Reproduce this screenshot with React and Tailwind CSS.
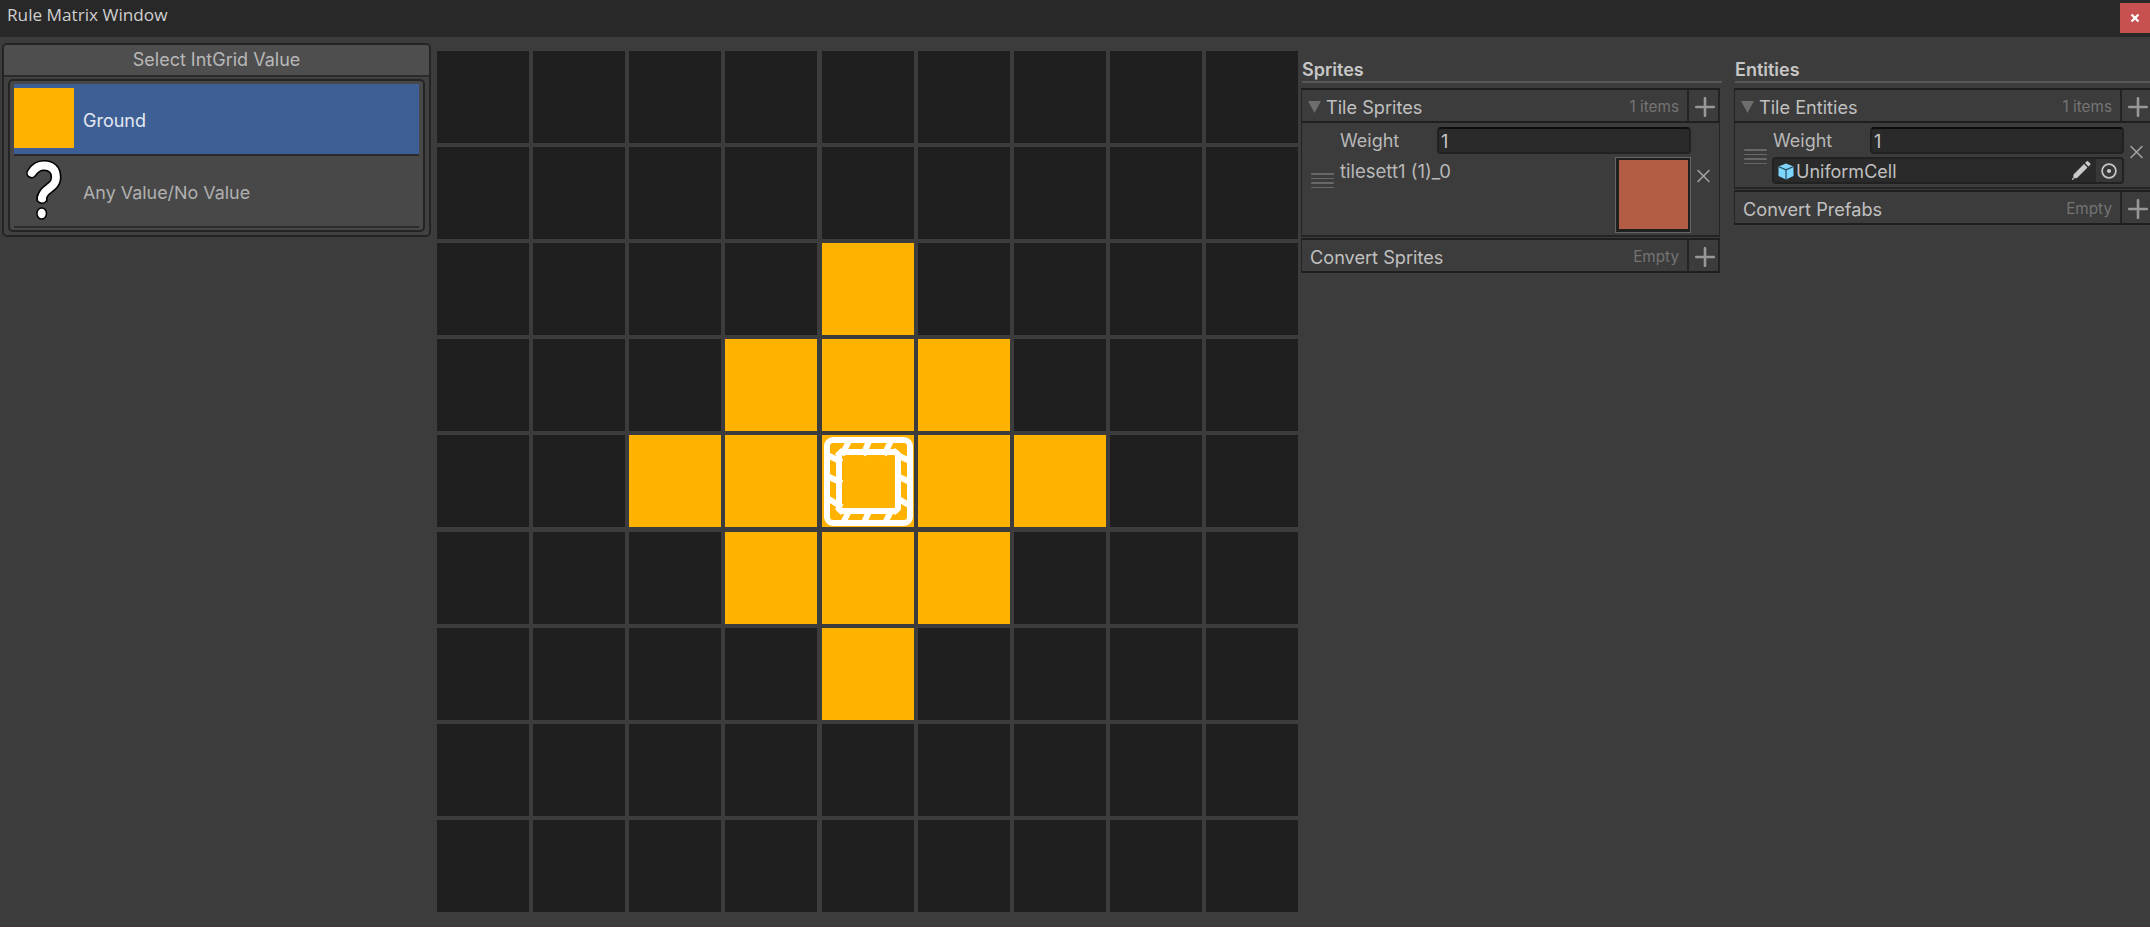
const YELLOW = new Set(['2-4','3-3','3-4','3-5','4-2','4-3','4-4','4-5','4-6','5-3','5-4','5-5','6-4']);

function CenterMark() {
  return (
    <svg width="92" height="92" viewBox="0 0 92 92" className="block">
      <g stroke="#fff" strokeWidth="6" fill="none">
        <path d="M28 4 20 20M48 4 41 20M70 4 62 20M28 74 20 90M48 74 41 90M70 74 62 90" />
        <path d="M5 20 20 27M5 41 20 48M5 63 20 72M75 20 90 27M75 41 90 48M75 63 90 72" />
        <path d="M14 20 20 14M72 14 78 20M14 73 20 79M72 79 78 73" strokeWidth="3" />
      </g>
      <rect x="5" y="5" width="83" height="83" rx="6" fill="none" stroke="#fff" strokeWidth="6" />
      <rect x="17" y="17" width="59" height="59" rx="4" fill="none" stroke="#fff" strokeWidth="6" />
    </svg>
  );
}

function Matrix() {
  return (
    <div className="mt-[14px] ml-[6px] grid h-[861px] w-[861px] shrink-0 grid-cols-[96px_96px_96px_97px_96px_96px_96px_96px_92px] grid-rows-[96px_96px_96px_96px_97px_96px_96px_96px_92px]">
      {Array.from({ length: 81 }, (_, i) => {
        const key = `${Math.floor(i / 9)}-${i % 9}`;
        return (
          <div key={key} className={`h-[92px] w-[92px] ${YELLOW.has(key) ? 'bg-[#ffb300]' : 'bg-[#1f1f1f]'}`}>
            {key === '4-4' && <CenterMark />}
          </div>
        );
      })}
    </div>
  );
}

function Plus() {
  return (
    <svg width="20" height="20" viewBox="0 0 20 20" className="block shrink-0">
      <path d="M10 1.200v17.600M1.200 10h17.600" stroke="#989898" strokeWidth="2.600" strokeLinecap="round" />
    </svg>
  );
}

function Cross() {
  return (
    <svg width="13" height="14" viewBox="0 0 13 14" className="block shrink-0">
      <path d="M1 1.500l11 11M12 1.500l-11 11" stroke="#a2a2a2" strokeWidth="1.6" strokeLinecap="round" />
    </svg>
  );
}

function Handle() {
  return (
    <div className="flex h-[15px] w-[23px] flex-col justify-between">
      {[0, 1, 2, 3].map((n) => (
        <div key={n} className="h-[1.5px] rounded-full bg-[#686868]" />
      ))}
    </div>
  );
}

function ListHeader({ title, note, open }) {
  return (
    <div className="flex h-[35px] w-[419px] border-t-2 border-b-2 border-[#1f1f1f]">
      <div className={`flex w-[386px] items-center border-l border-[#242424] pr-[8px] ${open ? 'pl-[6px]' : 'pl-[8px]'}`}>
        {open && (
          <svg width="13" height="12" viewBox="0 0 13 12" className="mt-[2px] mr-[5px] block">
            <path d="M0 0h13L6.500 12z" fill="#6e6e6e" />
          </svg>
        )}
        <span className="pt-[2px] text-[18.150px] leading-[22px] text-[#c0c0c0]">{title}</span>
        <span className="ml-auto pt-[2px] text-[15.300px] leading-[20px] text-[#747474]">{note}</span>
      </div>
      <div className="flex w-[33px] justify-center border-r-2 border-l-2 border-[#242424] pt-[7px] pl-[3px]">
        <Plus />
      </div>
    </div>
  );
}

function WeightField() {
  return (
    <div className="flex h-[27px]">
      <span className="w-[97px] pt-[3px] text-[18px] leading-[22px] text-[#b8b8b8]">Weight</span>
      <div className="h-[27px] w-[254px] rounded-[4px] border-2 border-[#212121] border-t-[#0d0d0d] bg-[#2a2a2a] pl-[2px] text-[18px] leading-[25px] text-[#c8c8c8]">1</div>
    </div>
  );
}

function Heading({ children }) {
  return (
    <div className="ml-px h-[26px] w-[420px] border-b-2 border-[#585858] text-[18px] leading-[25px] font-semibold text-[#c6c6c6]">{children}</div>
  );
}

function Sprites() {
  return (
    <div className="mt-[20px] ml-[3px] flex w-[421px] shrink-0 flex-col">
      <Heading>Sprites</Heading>
      <div className="mt-[5px]">
        <ListHeader title="Tile Sprites" note="1 items" open />
        <div className="flex h-[114px] w-[419px] border-r border-b-2 border-l border-[#242424] pt-[4px]">
          <div className="w-[38px] pt-[46px] pl-[9px]"><Handle /></div>
          <div className="w-[351px]">
            <WeightField />
            <div className="mt-[3px] flex justify-between">
              <span className="pt-[3px] text-[18.500px] leading-[22px] text-[#b8b8b8]">tilesett1 (1)_0</span>
              <div className="h-[76px] w-[76px] border border-[#666] bg-[#202020] pt-[2px] pl-[3px]">
                <div className="h-[69px] w-[69px] bg-[#b35d44]" />
              </div>
            </div>
          </div>
          <div className="pt-[42px] pl-[6px]"><Cross /></div>
        </div>
        <div className="mt-px"><ListHeader title="Convert Sprites" note="Empty" /></div>
      </div>
    </div>
  );
}

function PrefabCube() {
  return (
    <svg width="16" height="17" viewBox="0 0 16 17" className="mt-px block">
      <path d="M8 .5 15.500 3.500v9.500L8 16.500.5 13V3.500z" fill="#7fd6fd" />
      <path d="M.8 3.800 8 6.800l7.200-3M8 6.800v9.500" fill="none" stroke="#24485a" strokeWidth="1.200" />
    </svg>
  );
}

function Entities() {
  return (
    <div className="mt-[20px] flex w-[416px] shrink-0 flex-col overflow-hidden">
      <Heading>Entities</Heading>
      <div className="mt-[5px]">
        <ListHeader title="Tile Entities" note="1 items" open />
        <div className="flex h-[66px] w-[419px] border-r border-b-2 border-l border-[#242424] pt-[4px]">
          <div className="w-[38px] pt-[22px] pl-[9px]"><Handle /></div>
          <div className="w-[351px]">
            <WeightField />
            <div className="mt-[3px] -ml-px flex h-[27px] w-[352px] items-center overflow-hidden rounded-[4px] border-2 border-[#212121] bg-[#2a2a2a] pl-[4px]">
              <PrefabCube />
              <span className="ml-[2px] pt-[2px] text-[18px] leading-[22px] text-[#c0c0c0]">UniformCell</span>
              <svg width="20" height="20" viewBox="0 0 20 20" className="mr-[5px] mb-[2px] ml-auto block">
                <path d="M2.500 14.500 13 4l3.500 3.500L6 18l-3.800.4zM14 3l1.800-1.800q.6-.6 1.200 0l2.300 2.300q.6.6 0 1.200L17.500 6.500z" fill="#cacaca" />
                <path d="M1 18.300h1.500v1.500H1z" fill="#cacaca" />
              </svg>
              <div className="flex h-[23px] w-[26px] items-center justify-center bg-[#373737]">
                <svg width="16" height="16" viewBox="0 0 16 16" className="block">
                  <circle cx="8" cy="8" r="6.900" fill="none" stroke="#c8c8c8" strokeWidth="1.700" />
                  <circle cx="8" cy="8" r="2.100" fill="#c8c8c8" />
                </svg>
              </div>
            </div>
          </div>
          <div className="pt-[18px] pl-[6px]"><Cross /></div>
        </div>
        <div className="mt-px"><ListHeader title="Convert Prefabs" note="Empty" /></div>
      </div>
    </div>
  );
}

function QuestionMark() {
  const hook = 'M17.700 13C21 7.500 25 5.500 30 5.500c7.500 0 12 4 12 11.500C42 29 28.500 28 28 38.500';
  return (
    <svg width="60" height="60" viewBox="0 0 60 60" className="mb-[2px] block">
      <g fill="none" stroke="#000" strokeWidth="11" strokeLinejoin="round">
        <path d={hook} strokeLinecap="round" />
        <path d="M28 35v7" />
      </g>
      <ellipse cx="27.700" cy="53.500" rx="5.500" ry="6.300" fill="#000" />
      <g fill="none" stroke="#fff" strokeWidth="7.800">
        <path d={hook} strokeLinecap="round" />
        <path d="M28 36v4.700" />
      </g>
      <ellipse cx="27.700" cy="53.500" rx="4" ry="4.800" fill="#fff" />
    </svg>
  );
}

function ValuePicker() {
  return (
    <div className="mt-[6px] ml-[2px] h-[194px] w-[429px] shrink-0 rounded-[5px] border-2 border-[#242424] bg-[#414141]">
      <div className="h-[32px] rounded-t-[3px] border-b-2 border-[#2a2a2a] bg-[#4e4e4e] text-center text-[18px] leading-[30px] text-[#b8b8b8]">Select IntGrid Value</div>
      <div className="mx-[4px] mt-[2px] h-[153px] rounded-[5px] border-2 border-[#242424] bg-[#484848] px-[4px] pt-[3px]">
        <div className="flex h-[72px] items-center border-b-2 border-[#2a2a2a] bg-[#3e5f96]">
          <div className="mb-[2px] h-[60px] w-[60px] bg-[#ffb300]" />
          <span className="ml-[9px] pt-[3px] text-[18px] leading-[22px] text-[#e4e8ef]">Ground</span>
        </div>
        <div className="flex h-[72px] items-center border-b-2 border-[#2c2c2c]">
          <QuestionMark />
          <span className="ml-[9px] pt-[3px] text-[17.900px] leading-[22px] text-[#b0b0b0]">Any Value/No Value</span>
        </div>
      </div>
    </div>
  );
}

export default function App() {
  return (
    <div className="flex h-[927px] w-[2150px] flex-col overflow-hidden border-b border-[#40363a] bg-[#3c3c3c] font-['Inter',sans-serif]">
      <div className="flex h-[37px] shrink-0 justify-between bg-[#282828]">
        <span className="pl-[7px] font-['Open_Sans',sans-serif] text-[17.200px] leading-[29px] text-[#cfcfcf]">Rule Matrix Window</span>
        <div className="mt-[3px] flex h-[30px] w-[30px] items-center justify-center bg-[#c75050]">
          <svg width="10" height="8" viewBox="0 0 10 8" className="block">
            <path d="M1.500.5l7 7M8.500.5l-7 7" stroke="#fff" strokeWidth="2.200" />
          </svg>
        </div>
      </div>
      <div className="flex min-h-0 flex-1">
        <ValuePicker />
        <Matrix />
        <Sprites />
        <div className="ml-[12px]"><Entities /></div>
      </div>
    </div>
  );
}
